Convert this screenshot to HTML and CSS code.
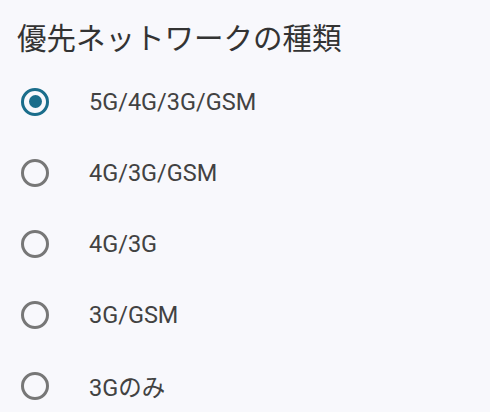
FILE: index.html
```html
<!DOCTYPE html>
<html lang="ja">
<head>
<meta charset="utf-8">
<link rel="stylesheet" href="styles.css">
</head>
<body>
<div class="title">優先ネットワークの種類</div>
<div class="list">
  <div class="row"><span class="radio checked"></span><span class="label">5G/4G/3G/GSM</span></div>
  <div class="row"><span class="radio"></span><span class="label">4G/3G/GSM</span></div>
  <div class="row"><span class="radio"></span><span class="label">4G/3G</span></div>
  <div class="row"><span class="radio"></span><span class="label">3G/GSM</span></div>
  <div class="row"><span class="radio"></span><span class="label">3Gのみ</span></div>
</div>
</body>
</html>
```
FILE: styles.css
```css
html, body {
  margin: 0;
  padding: 0;
  background: #f8f8fc;
}
body {
  width: 490px;
  height: 412px;
  overflow: hidden;
}
.title {
  font-family: "Noto Sans CJK JP", "Noto Sans", sans-serif;
  font-size: 29.5px;
  color: #333333;
  padding: 6px 0 0 17px;
  line-height: 60px;
  height: 60px;
}
.list {
  display: flex;
  flex-direction: column;
}
.row {
  display: flex;
  align-items: center;
  height: 71px;
  padding-left: 21px;
  gap: 40px;
}
.radio {
  box-sizing: border-box;
  width: 28px;
  height: 28px;
  border: 3px solid #777777;
  border-radius: 50%;
  display: flex;
  align-items: center;
  justify-content: center;
  flex: none;
}
.radio.checked {
  border-color: #1a6d8b;
}
.radio.checked::after {
  content: "";
  width: 13px;
  height: 13px;
  border-radius: 50%;
  background: #1a6d8b;
}
.label {
  font-family: Roboto, "Noto Sans CJK JP", sans-serif;
  font-size: 23.5px;
  color: #424242;
}
```
